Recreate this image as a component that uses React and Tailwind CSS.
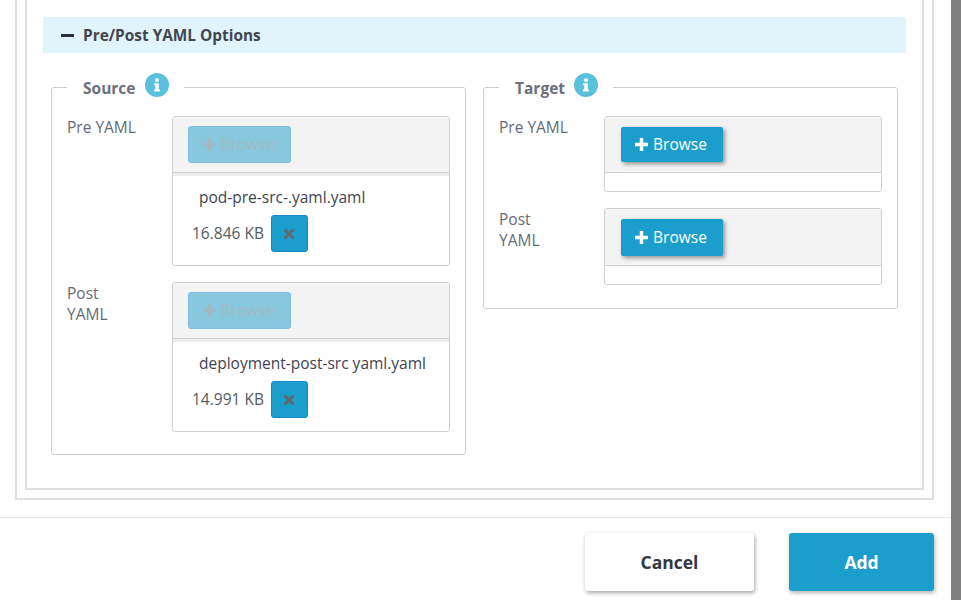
import React from "react";

const font = { fontFamily: '"Open Sans", "Noto Sans", sans-serif' };

function Info() {
  return (
    <span className="inline-flex h-6 w-6 items-center justify-center rounded-full bg-[#5bc0de]">
      <svg width="10" height="14" viewBox="0 0 10 14" fill="#fff">
        <rect x="3.2" y="0.5" width="3.6" height="3.2" rx="0.6" />
        <path d="M2.2 5.2h4.6v6.2h1.2v2H2v-2h1.3V7.2H2.2z" />
      </svg>
    </span>
  );
}

function Plus() {
  return (
    <svg width="13" height="13" viewBox="0 0 12 12" fill="currentColor">
      <path d="M4.4 0h3.2v4.4H12v3.2H7.6V12H4.4V7.6H0V4.4h4.4z" />
    </svg>
  );
}

function Browse({ disabled, tall }) {
  if (disabled) {
    return (
      <button className="flex h-[37px] w-[103px] items-center justify-center gap-[5px] rounded-[3px] border border-[#7fbde6] bg-[#88c8df] pr-[2px] text-[15.5px] text-[#a3b9c2]">
        <Plus />
        <span className="mt-[1px]">Browse</span>
      </button>
    );
  }
  return (
    <button
      className={`flex w-[102px] items-center justify-center gap-[5px] rounded-[2px] bg-[#1b9ecc] pr-[2px] text-[15.5px] font-medium text-white shadow-[2px_2px_4px_rgba(0,0,0,0.4)] ${
        tall ? "h-[37px]" : "h-[35px]"
      }`}
    >
      <Plus />
      <span className="mt-[1px]">Browse</span>
    </button>
  );
}

function Upload({ disabled, name, size, tall }) {
  return (
    <div className="w-[278px] overflow-hidden rounded-[3px] border border-[#cfcfcf] bg-white">
      <div
        className={`flex items-start border-b border-[#cfcfcf] bg-[#f3f3f3] ${
          disabled ? "h-[56px] pl-[15px] pt-[9px]" : tall ? "h-[57px] pl-[16px] pt-[10px]" : "h-[56px] pl-[16px] pt-[10px]"
        }`}
      >
        <Browse disabled={disabled} tall={tall} />
      </div>
      {disabled ? (
        <div className="h-[92px] border-t-[3px] border-[#ececec] pl-[19px]">
          <div className="whitespace-nowrap pl-[7px] pt-[11px] text-[15.5px] leading-[20px] text-[#3f4450]">{name}</div>
          <div className="mt-[8px] flex items-center gap-[7px] text-[15.5px] text-[#555b66]">
            <span>{size}</span>
            <span className="flex h-[37px] w-[37px] items-center justify-center rounded-[3px] border border-[#1588c8] bg-[#1b9ecc]">
              <svg width="10" height="10" viewBox="0 0 10 10" stroke="#5f6a70" strokeWidth="2.8" strokeLinecap="square">
                <path d="M1.5 1.5l7 7M8.5 1.5l-7 7" />
              </svg>
            </span>
          </div>
        </div>
      ) : (
        <div className="h-[18px]" />
      )}
    </div>
  );
}

function Row({ label, children, className }) {
  return (
    <div className={`flex items-start ${className || ""}`}>
      <div className="w-[120px] shrink-0 pl-[15px] pr-[31px] pt-[1px] text-[15.5px] leading-[21px] text-[#666b75]">{label}</div>
      {children}
    </div>
  );
}

function Group({ title, children, className }) {
  return (
    <fieldset className={`w-[415px] rounded-[3px] border border-[#cfcfcf] ${className}`}>
      <legend className="ml-[15px] flex h-[28px] items-center pl-[16px] pr-[15px]">
        <span className="mt-[3px] text-[15.5px] font-bold text-[#6b707a]">{title}</span>
        <span className="ml-[9px] -mt-[4px] flex"><Info /></span>
      </legend>
      {children}
    </fieldset>
  );
}

export default function App() {
  return (
    <div style={font} className="flex h-[600px] w-[961px] overflow-hidden bg-white">
      <div className="flex w-[951px] flex-col">
        <div className="h-[518px] shrink-0 border-b border-[#e6e6e6]">
          <div className="ml-[15px] h-[500px] w-[919px] border-x-2 border-b-2 border-[#e0e0e0] px-[8px]">
            <div className="h-[490px] border-x-2 border-b-2 border-[#e0e0e0] px-[16px] pt-[17px]">
              <div className="flex h-[36px] w-[863px] items-center gap-[9px] bg-[#e1f3fb] pl-[18px] text-[15.4px] font-bold text-[#41464f]">
                <span className="h-[3px] w-[13px] bg-[#2b2f36]" />
                <span className="mt-[1px]">Pre/Post YAML Options</span>
              </div>
              <div className="mt-[20px] flex items-start gap-[17px] pl-[8px]">
                <Group title="Source" className="h-[382px]">
                  <div className="mt-[15px]">
                    <Row label="Pre YAML">
                      <Upload disabled name="pod-pre-src-.yaml.yaml" size="16.846 KB" />
                    </Row>
                    <Row label="Post YAML" className="mt-[16px]">
                      <Upload disabled name="deployment-post-src yaml.yaml" size="14.991 KB" />
                    </Row>
                  </div>
                </Group>
                <Group title="Target" className="h-[236px]">
                  <div className="mt-[15px]">
                    <Row label="Pre YAML">
                      <Upload />
                    </Row>
                    <Row label="Post YAML" className="mt-[16px]">
                      <Upload tall />
                    </Row>
                  </div>
                </Group>
              </div>
            </div>
          </div>
        </div>
        <div className="flex flex-1 items-start justify-end pr-[17px] pt-[15px]">
          <button className="h-[58px] w-[169px] rounded-[3px] bg-white text-[17.5px] font-bold text-[#33373f] shadow-[1px_2px_4px_rgba(0,0,0,0.35)]">
            Cancel
          </button>
          <button className="ml-[35px] h-[58px] w-[145px] rounded-[3px] bg-[#1b9ecc] text-[17.5px] font-bold text-white shadow-[1px_2px_4px_rgba(0,0,0,0.3)]">
            Add
          </button>
        </div>
      </div>
      <div className="w-[10px] shrink-0 bg-[#808080]" />
    </div>
  );
}
